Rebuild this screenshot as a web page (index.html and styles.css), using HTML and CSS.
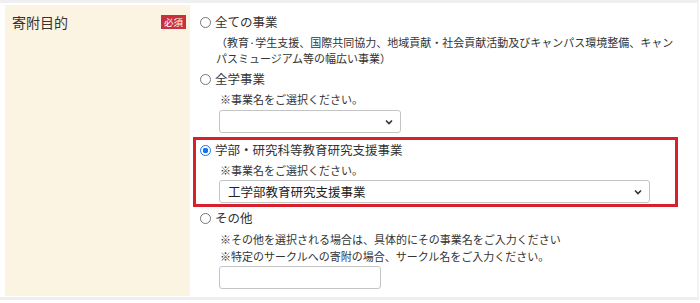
FILE: index.html
```html
<!DOCTYPE html>
<html lang="ja">
<head>
<meta charset="utf-8">
<link rel="stylesheet" href="styles.css">
</head>
<body>
<div class="form">
  <div class="row">
    <div class="head">
      <span class="head-label">寄附目的</span>
      <span class="badge">必須</span>
    </div>
    <div class="cell">
      <div class="opt">
        <div class="opt-label"><span class="radio"></span><span>全ての事業</span></div>
        <div class="desc">（教育·学生支援、国際共同協力、地域貢献・社会貢献活動及びキャンパス環境整備、キャンパスミュージアム等の幅広い事業）</div>
      </div>
      <div class="opt opt-2">
        <div class="opt-label"><span class="radio"></span><span>全学事業</span></div>
        <div class="note">※事業名をご選択ください。</div>
        <div class="select select-short"><span class="select-text"></span><svg class="chev" width="8" height="6" viewBox="0 0 8 6"><path d="M1 1.5 L4 4.5 L7 1.5" fill="none" stroke="#333" stroke-width="1.6"/></svg></div>
      </div>
      <div class="opt opt-hl">
        <div class="opt-label"><span class="radio checked"></span><span>学部・研究科等教育研究支援事業</span></div>
        <div class="note">※事業名をご選択ください。</div>
        <div class="select select-long"><span class="select-text">工学部教育研究支援事業</span><svg class="chev" width="8" height="6" viewBox="0 0 8 6"><path d="M1 1.5 L4 4.5 L7 1.5" fill="none" stroke="#333" stroke-width="1.6"/></svg></div>
      </div>
      <div class="opt opt-4">
        <div class="opt-label"><span class="radio"></span><span>その他</span></div>
        <div class="notes">
          <div>※その他を選択される場合は、具体的にその事業名をご入力ください</div>
          <div>※特定のサークルへの寄附の場合、サークル名をご入力ください。</div>
        </div>
        <div class="text-input"></div>
      </div>
    </div>
  </div>
</div>
</body>
</html>
```

FILE: styles.css
```css
* { box-sizing: border-box; }
html, body { margin: 0; padding: 0; background: #fff; }
body {
  font-family: "Noto Sans CJK JP", "Noto Sans", sans-serif;
  color: #333;
  width: 700px;
  height: 303px;
  overflow: hidden;
}
.form {
  border-top: 3px solid #efefef;
  border-bottom: 3px solid #efefef;
  border-right: 2px solid #f3f3f3;
  padding: 2px 0 1px 5px;
  width: 699px;
}
.row {
  display: flex;
  gap: 3px;
}
.head {
  width: 185px;
  flex: none;
  background: #fcf4e2;
  display: flex;
  align-items: flex-start;
  justify-content: space-between;
  padding: 8px 4px 0 7px;
}
.head-label {
  font-size: 14px;
  line-height: 18px;
  color: #333;
}
.badge {
  background: #c9303d;
  color: #fff;
  font-size: 9.5px;
  line-height: 14px;
  height: 14px;
  padding: 0 3px;
  margin-top: 2px;
}
.cell {
  flex: 1;
  padding: 7px 19px 7px 0;
}
.opt {
  padding-left: 7px;
}
.opt-label {
  display: flex;
  align-items: center;
  font-size: 12.5px;
  line-height: 20px;
  height: 20px;
}
.radio {
  width: 11px;
  height: 11px;
  border: 1px solid #777;
  border-radius: 50%;
  background: #fff;
  margin-right: 4px;
  flex: none;
}
.radio.checked {
  border: 1px solid #1a73e8;
  background: radial-gradient(circle, #1a73e8 0 2.6px, #fff 3px 100%);
}
.desc {
  font-size: 11px;
  line-height: 16px;
  padding-left: 16px;
  margin-top: 2px;
}
.opt-2 { margin-top: 3px; }
.note {
  font-size: 11px;
  line-height: 20px;
  padding-left: 20px;
}
.select {
  margin: 1px 0 0 19px;
  height: 23px;
  border: 1px solid #c4c4c4;
  border-radius: 3px;
  background: #fff;
  display: flex;
  align-items: center;
  justify-content: space-between;
  padding: 0 7px 0 8px;
}
.select-short { width: 182px; }
.select-long { width: 431px; }
.select-text {
  font-size: 12.5px;
  color: #222;
}
.opt-hl {
  border: 3px solid #d8202c;
  padding: 0 0 0 4px;
  margin-top: 4px;
}
.opt-hl .select { margin-top: 0; margin-bottom: 1px; }
.opt-4 { margin-top: 1px; }
.notes {
  font-size: 11px;
  line-height: 17px;
  padding-left: 20px;
  margin-top: 3px;
}
.text-input {
  margin: 1px 0 0 19px;
  width: 162px;
  height: 23px;
  border: 1px solid #c4c4c4;
  border-radius: 3px;
  background: #fff;
}
```
